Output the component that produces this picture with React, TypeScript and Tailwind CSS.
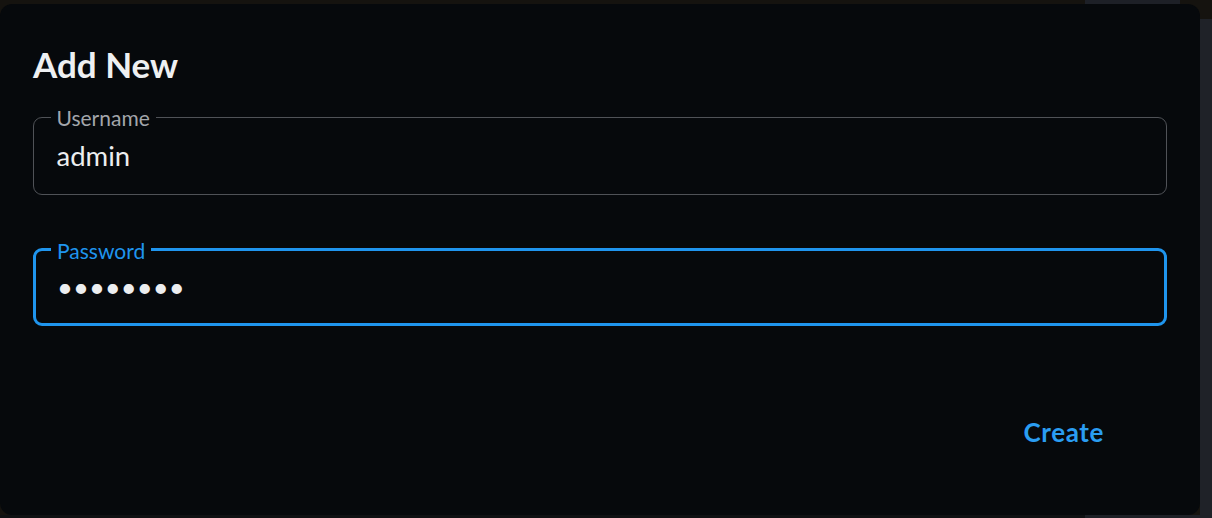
import React from "react";

export default function App() {
  const font = { fontFamily: "Lato, 'Noto Sans', sans-serif" };
  return (
    <div className="flex h-[518px] w-[1212px] overflow-hidden bg-[#15130f]" style={font}>
      <div className="flex w-[1200px] flex-col">
        <div className="flex h-[4px]">
          <div className="w-[1085px] bg-[#15130f]" />
          <div className="w-[95px] bg-[#1d2027]" />
          <div className="flex-1 bg-[#15130f]" />
        </div>
        <div className="flex h-[511px] flex-col rounded-[12px] bg-[#06090c] px-[33px] pt-[40px]">
          <h2 className="text-[35px] font-bold leading-[40px] text-[#eef0f2]">Add New</h2>

          <div className="relative mt-[33px] flex h-[78px] items-center rounded-[9px] border-[1.5px] border-[#4f5257] pl-[22.5px]">
            <span className="absolute left-[16.5px] top-[-11px] bg-[#06090c] px-[6px] text-[21px] leading-[21px] text-[#a3a6ab]">
              Username
            </span>
            <span className="text-[27.5px] leading-[28px] text-[#eceef0]">admin</span>
          </div>

          <div className="relative mt-[53px] flex h-[78px] items-center rounded-[9px] border-[3px] border-[#1f95ee] pl-[21px]">
            <span className="absolute left-[15px] top-[-11px] bg-[#06090c] px-[6px] text-[21px] leading-[21px] text-[#1f95ee]">
              Password
            </span>
            <span className="text-[27.5px] leading-[28px] text-[#eceef0]">••••••••</span>
          </div>

          <div className="mt-[93px] flex justify-end pr-[63px]">
            <button className="text-[26px] font-bold leading-[26px] tracking-[0.6px] text-[#2a9df2]">Create</button>
          </div>
        </div>
        <div className="flex h-[3px]">
          <div className="w-[1085px] bg-[#0f1113]" />
          <div className="flex-1 bg-[#1d2026]" />
        </div>
      </div>
      <div className="flex w-[12px] flex-col">
        <div className="h-[19px] bg-[#15130f]" />
        <div className="flex-1 bg-[#1f2228]" />
      </div>
    </div>
  );
}
